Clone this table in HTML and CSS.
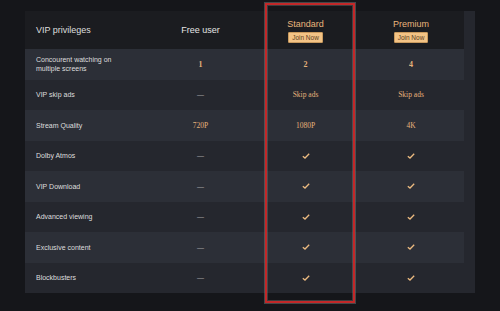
FILE: index.html
```html
<!DOCTYPE html>
<html lang="en">

<head>
    <meta charset="UTF-8">
    <meta name="viewport" content="width=device-width, initial-scale=1.0">
    <title>VIP privileges</title>
    <link rel="stylesheet" href="styles.css">
</head>

<body>

    <div class="page">
        <div class="plans">
            <!-- Header -->
            <div class="cell head label">VIP privileges</div>
            <div class="cell head">Free user</div>
            <div class="cell head plan">
                <span class="plan-name">Standard</span>
                <button class="join">Join Now</button>
            </div>
            <div class="cell head plan">
                <span class="plan-name">Premium</span>
                <button class="join">Join Now</button>
            </div>

            <!-- Rows -->
            <div class="cell label odd">Concourent watching on<br>multiple screens</div>
            <div class="cell odd value big">1</div>
            <div class="cell odd value big">2</div>
            <div class="cell odd value big">4</div>

            <div class="cell label">VIP skip ads</div>
            <div class="cell none">—</div>
            <div class="cell value">Skip ads</div>
            <div class="cell value">Skip ads</div>

            <div class="cell label odd">Stream Quality</div>
            <div class="cell odd value">720P</div>
            <div class="cell odd value">1080P</div>
            <div class="cell odd value">4K</div>

            <div class="cell label">Dolby Atmos</div>
            <div class="cell none">—</div>
            <div class="cell"><svg class="check" viewBox="0 0 8 6"><polyline points="0.8,3.2 3,5 7.2,0.8"/></svg></div>
            <div class="cell"><svg class="check" viewBox="0 0 8 6"><polyline points="0.8,3.2 3,5 7.2,0.8"/></svg></div>

            <div class="cell label odd">VIP Download</div>
            <div class="cell odd none">—</div>
            <div class="cell odd"><svg class="check" viewBox="0 0 8 6"><polyline points="0.8,3.2 3,5 7.2,0.8"/></svg></div>
            <div class="cell odd"><svg class="check" viewBox="0 0 8 6"><polyline points="0.8,3.2 3,5 7.2,0.8"/></svg></div>

            <div class="cell label">Advanced viewing</div>
            <div class="cell none">—</div>
            <div class="cell"><svg class="check" viewBox="0 0 8 6"><polyline points="0.8,3.2 3,5 7.2,0.8"/></svg></div>
            <div class="cell"><svg class="check" viewBox="0 0 8 6"><polyline points="0.8,3.2 3,5 7.2,0.8"/></svg></div>

            <div class="cell label odd">Exclusive content</div>
            <div class="cell odd none">—</div>
            <div class="cell odd"><svg class="check" viewBox="0 0 8 6"><polyline points="0.8,3.2 3,5 7.2,0.8"/></svg></div>
            <div class="cell odd"><svg class="check" viewBox="0 0 8 6"><polyline points="0.8,3.2 3,5 7.2,0.8"/></svg></div>

            <div class="cell label">Blockbusters</div>
            <div class="cell none">—</div>
            <div class="cell"><svg class="check" viewBox="0 0 8 6"><polyline points="0.8,3.2 3,5 7.2,0.8"/></svg></div>
            <div class="cell"><svg class="check" viewBox="0 0 8 6"><polyline points="0.8,3.2 3,5 7.2,0.8"/></svg></div>
        </div>

        <!-- highlight around the Standard column -->
        <div class="highlight"></div>
    </div>

</body>

</html>
```

FILE: styles.css
```css
body {
    margin: 0;
    background-color: #15161a;
    font-family: 'Liberation Sans', Arial, sans-serif;
    color: #dcdcdc;
}

.page {
    position: relative;
    padding: 11px 25px;
}

.plans {
    display: grid;
    grid-template-columns: 123px 105px 105px 106px;
    grid-template-rows: 38px;
    grid-auto-rows: 30.5px;
    background-color: #25272e;
}

.cell {
    display: flex;
    align-items: center;
    justify-content: center;
    font-size: 7px;
}

.head {
    background-color: #1b1c20;
    font-size: 9px;
    color: #e4e4e4;
}

.label {
    justify-content: flex-start;
    padding-left: 11px;
    line-height: 9px;
    color: #dedede;
}

.odd {
    background-color: #2c2f37;
}

.plan {
    flex-direction: column;
    gap: 3px;
    padding-top: 2px;
}

.plan-name {
    color: #e9b57c;
    line-height: 10px;
}

.join {
    box-sizing: border-box;
    height: 11px;
    font-family: 'Liberation Sans', Arial, sans-serif;
    font-size: 6.5px;
    line-height: 7px;
    padding: 1px 3px;
    background-color: #f3c385;
    color: #5b3f22;
    border: 1px solid #c99a5e;
    border-radius: 1px;
}

.value {
    font-family: 'Liberation Serif', 'Times New Roman', serif;
    font-size: 7.5px;
    color: #e6b27b;
}

.big {
    font-size: 8px;
    font-weight: 700;
}

.none {
    color: #a8a8a8;
}

.check {
    width: 8px;
    height: 6px;
    fill: none;
    stroke: #edbb80;
    stroke-width: 1.3;
}

.highlight {
    position: absolute;
    left: 265px;
    top: 3px;
    width: 86px;
    height: 296px;
    border: 2px solid #c22829;
    box-shadow: 0 0 0 1px rgba(120, 120, 120, 0.5), inset 0 0 0 1px rgba(120, 120, 120, 0.4);
}
```
